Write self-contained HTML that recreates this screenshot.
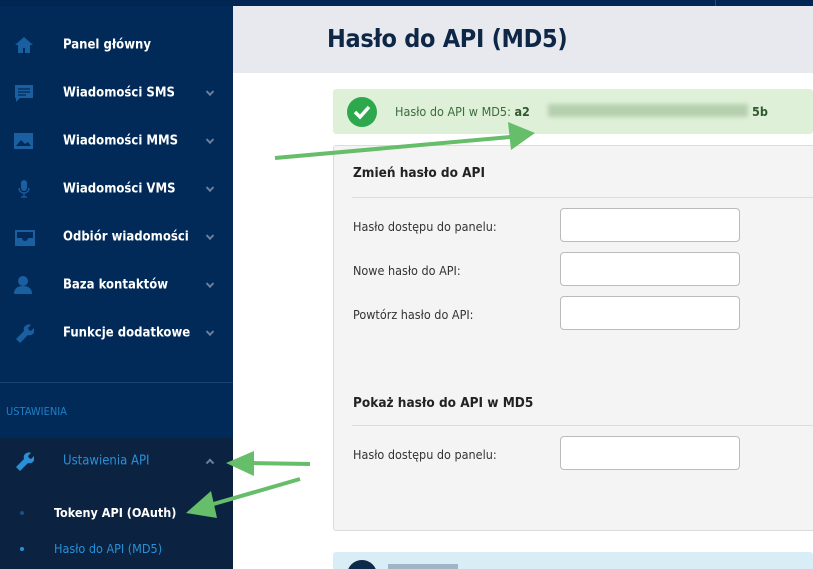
<!DOCTYPE html>
<html style="width:813px;height:569px;overflow:hidden"><head><meta charset="utf-8"><style>
*{margin:0;padding:0;box-sizing:border-box}
body{width:813px;height:569px;overflow:hidden;position:relative;background:#fff;font-family:"DejaVu Sans Condensed","Liberation Sans",sans-serif}
.top{position:absolute;left:0;top:0;width:813px;height:6px;background:#022653}
.side{position:absolute;left:0;top:0;width:233px;height:569px;background:#022a58}
.item{position:absolute;left:0;width:233px;height:48px;color:#fff;font-weight:bold;font-size:13px}
.item span{position:absolute;left:63px;top:50%;transform:translateY(-50%)}
.item .ic{position:absolute;left:14px;top:50%;transform:translateY(-50%);width:20px;height:20px}
.chev{position:absolute;left:207px;top:50%;width:6px;height:6px;border-right:2px solid #6b7f9c;border-bottom:2px solid #6b7f9c;transform:translateY(-70%) rotate(45deg)}
.dark{position:absolute;left:0;top:438px;width:233px;height:131px;background:#0b2341}
.hdr{position:absolute;left:233px;top:6px;width:580px;height:67px;background:#e8e9ee}
h1{position:absolute;left:327px;top:24px;font-size:25px;color:#0e2746;font-weight:bold;letter-spacing:-0.3px}
.ok{position:absolute;left:333px;top:89px;width:480px;height:45px;background:#dff0d8;border-radius:3px}
.panel{position:absolute;left:333px;top:145px;width:490px;height:386px;background:#f4f4f4;border:1px solid #dcdcdc;border-radius:3px}
.lbl{position:absolute;left:353px;font-size:12.5px;color:#333}
.inp{position:absolute;left:560px;width:180px;height:34px;background:#fff;border:1px solid #bbb;border-radius:4px}
.h3{position:absolute;left:353px;font-size:13.5px;font-weight:bold;color:#222}
.hr{position:absolute;left:352px;width:461px;height:1px;background:#ddd}
</style></head><body>
<div class="side"></div>
<div class="top"></div>
<div class="item" style="top:21px"><svg class="ic" viewBox="0 0 20 20"><path d="M10 2L1 10h3v8h5v-5h2v5h5v-8h3z" fill="#1a5fa0"/></svg><span>Panel główny</span></div>
<div class="item" style="top:69px"><svg class="ic" viewBox="0 0 20 20"><path d="M1 2h18v13H6l-4 4v-4H1z" fill="#1a5fa0"/><path d="M4 6h12M4 9h12M4 12h8" stroke="#022a58" stroke-width="1.3"/></svg><span>Wiadomości SMS</span><i class="chev"></i></div>
<div class="item" style="top:117px"><svg class="ic" viewBox="0 0 20 20"><rect x="0" y="2" width="19" height="16" fill="#1a5fa0"/><path d="M2 15l5-6 4 4 3-2 3 4z" fill="#022a58"/></svg><span>Wiadomości MMS</span><i class="chev"></i></div>
<div class="item" style="top:165px"><svg class="ic" viewBox="0 0 20 20"><rect x="7" y="1" width="6" height="11" rx="3" fill="#1a5fa0"/><path d="M5 9a5 5 0 0010 0M10 14v4M7 18h6" stroke="#1a5fa0" fill="none" stroke-width="1.3"/></svg><span>Wiadomości VMS</span><i class="chev"></i></div>
<div class="item" style="top:213px"><svg class="ic" viewBox="0 0 22 20" style="width:22px"><path d="M1 3h20v16H1z" fill="#1a5fa0"/><path d="M3 5h16v6h-5a3 3 0 01-6 0H3z" fill="#022a58"/></svg><span>Odbiór wiadomości</span><i class="chev"></i></div>
<div class="item" style="top:261px"><svg class="ic" viewBox="0 0 20 20"><circle cx="9" cy="6" r="5" fill="#1a5fa0"/><path d="M0 19c0-6 4-8 9-8s9 2 9 8z" fill="#1a5fa0"/></svg><span>Baza kontaktów</span><i class="chev"></i></div>
<div class="item" style="top:309px"><svg class="ic" viewBox="0 0 20 20"><path d="M2 16l8-8a5 5 0 017-6l-3 3 1 2 2 1 3-3a5 5 0 01-6 7l-8 8z" fill="#1a5fa0"/></svg><span>Funkcje dodatkowe</span><i class="chev"></i></div>
<div style="position:absolute;left:0;top:382px;width:233px;height:1px;background:#1b3f6e"></div>
<div style="position:absolute;left:6px;top:405px;font-size:11px;color:#1f7fc6">USTAWIENIA</div>
<div class="dark"></div>
<div class="item" style="top:437px;color:#2a8fd6;font-weight:normal"><svg class="ic" viewBox="0 0 20 20"><path d="M2 16l8-8a5 5 0 017-6l-3 3 1 2 2 1 3-3a5 5 0 01-6 7l-8 8z" fill="#2a8fd6"/></svg><span>Ustawienia API</span><i class="chev" style="transform:translateY(-20%) rotate(225deg)"></i></div>
<div style="position:absolute;left:20px;top:511px;width:4px;height:4px;border-radius:2px;background:#1b4f85"></div>
<div style="position:absolute;left:54px;top:505px;font-size:12.5px;color:#fff;font-weight:bold">Tokeny API (OAuth)</div>
<div style="position:absolute;left:20px;top:547px;width:4px;height:4px;border-radius:2px;background:#2a8fd6"></div>
<div style="position:absolute;left:54px;top:541px;font-size:12.5px;color:#2a8fd6">Hasło do API (MD5)</div>

<div class="hdr"></div>
<div style="position:absolute;left:715px;top:0;width:1px;height:6px;background:#2b4a75"></div>
<h1>Hasło do API (MD5)</h1>
<div class="ok"></div>
<svg style="position:absolute;left:347px;top:97px" width="30" height="30" viewBox="0 0 30 30"><circle cx="15" cy="15" r="15" fill="#2ea84d"/><path d="M8 15l5 5 9-10" stroke="#fff" stroke-width="3.5" fill="none"/></svg>
<div style="position:absolute;left:395px;top:104px;font-size:12.5px;color:#3c6b3c">Hasło do API w MD5: <b style="color:#2f5a2f">a2</b></div>
<div style="position:absolute;left:548px;top:104px;width:200px;height:13px;background:#b5d0ae;filter:blur(2px)"></div>
<div style="position:absolute;left:752px;top:104px;font-size:12.5px;color:#2f5a2f;font-weight:bold">5b</div>

<div class="panel"></div>
<div class="h3" style="top:165px">Zmień hasło do API</div>
<div class="hr" style="top:197px"></div>
<div class="lbl" style="top:219px">Hasło dostępu do panelu:</div>
<div class="lbl" style="top:263px">Nowe hasło do API:</div>
<div class="lbl" style="top:307px">Powtórz hasło do API:</div>
<div class="inp" style="top:208px"></div>
<div class="inp" style="top:252px"></div>
<div class="inp" style="top:296px"></div>
<div class="h3" style="top:395px">Pokaż hasło do API w MD5</div>
<div class="hr" style="top:425px"></div>
<div class="lbl" style="top:447px">Hasło dostępu do panelu:</div>
<div class="inp" style="top:436px"></div>

<div style="position:absolute;left:333px;top:552px;width:480px;height:17px;background:#d9edf7;border-radius:3px 3px 0 0;overflow:hidden">
<div style="position:absolute;left:14px;top:8px;width:30px;height:30px;border-radius:15px;background:#0e2a4a"></div>
<div style="position:absolute;left:55px;top:12px;width:70px;height:5px;background:#6a8094;opacity:.5"></div>
</div>

<svg style="position:absolute;left:0;top:0" width="813" height="569">
<g stroke="#66bd6a" stroke-width="4" fill="#66bd6a">
<line x1="275" y1="158" x2="510" y2="137"/><polygon points="535,133 508,122 511,150" stroke="none"/>
<line x1="310" y1="464" x2="250" y2="463"/><polygon points="226,463 254,451 254,476" stroke="none"/>
<line x1="300" y1="479" x2="210" y2="505"/><polygon points="186,513 211,491 217,518" stroke="none"/>
</g></svg>
</body></html>
